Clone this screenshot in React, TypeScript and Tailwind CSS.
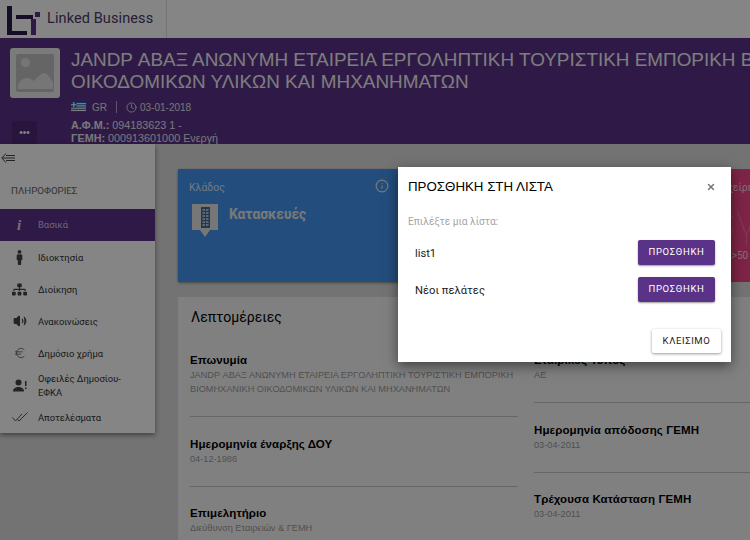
import React from "react";
import { Info, Clock, X, Volume2, Euro } from "lucide-react";
import { FaSitemap, FaMale } from "react-icons/fa";

const Logo = () => (
  <svg width="34" height="31" viewBox="0 0 34 31" className="shrink-0">
    <path d="M0 2h5v25h15v4H0z" fill="#2f1a4d" />
    <path d="M9 11h17v4H9z" fill="#2f1a4d" />
    <rect x="28" y="8" width="5" height="5" fill="#5a3288" />
    <rect x="24" y="15" width="5" height="16" fill="#5a3288" />
  </svg>
);

const Placeholder = () => (
  <svg width="50" height="50" viewBox="0 0 50 50" className="block">
    <rect width="50" height="50" rx="3" fill="#ececec" />
    <rect x="6" y="6" width="38" height="38" rx="2" fill="#c2c2c2" />
    <circle cx="15.500" cy="14.500" r="4.500" fill="#e2e2e2" />
    <path d="M8 41v-4c2-4 5-7 9-7 3 0 5 2 7 3 3-3 7-8 10-8 3 0 6 5 9 9v7z" fill="#e2e2e2" />
  </svg>
);

const Flag = () => (
  <svg width="15" height="10" viewBox="0 0 27 18">
    <rect width="27" height="18" fill="#fff" />
    {[0, 4, 8, 12, 16].map((y) => (
      <rect key={y} y={y} width="27" height="2" fill="#1f5fb0" />
    ))}
    <rect width="10" height="10" fill="#1f5fb0" />
    <path d="M4 0h2v10H4zM0 4h10v2H0z" fill="#fff" />
  </svg>
);

const Tower = () => (
  <svg width="26" height="33" viewBox="0 0 26 33">
    <path d="M0 0h26v26h-8l-5 7-5-7H0z" fill="#e4e4e4" />
    <path d="M9 3h9v21H9z" fill="#3f6ea3" />
    <path d="M10.500 6h6M10.500 9h6M10.500 12h6M10.500 15h6M10.500 18h6M10.500 21h6" stroke="#e4e4e4" strokeWidth="1.300" />
    <path d="M13.500 4v19" stroke="#3f6ea3" strokeWidth="1" />
  </svg>
);

const DebtIcon = () => (
  <svg width="14" height="13" viewBox="0 0 14 13" fill="#444">
    <circle cx="5.500" cy="3.500" r="3" />
    <path d="M0 12.500c0-3 2.500-4.500 5.500-4.500s5.500 1.500 5.500 4.500z" />
    <rect x="12" y="2" width="1.500" height="5" />
    <rect x="12" y="8.500" width="1.500" height="1.600" />
  </svg>
);

const DoubleCheck = () => (
  <svg width="16" height="10" viewBox="0 0 16 10" fill="none" stroke="#555" strokeWidth="1">
    <path d="M0.500 5.500l3 3.500 6.500-7" />
    <path d="M5.500 7.500l1.500 1.500 8.500-8.500" />
  </svg>
);

const BackArrow = () => (
  <svg width="14" height="10" viewBox="0 0 14 10" fill="none" stroke="#444" strokeWidth="1">
    <path d="M5 0.500L0.800 5 5 9.500" />
    <path d="M1 5h13M5 2.500h9M5 7.500h9" />
  </svg>
);

const nav: { label: React.ReactNode; icon: React.ReactNode }[] = [
  { label: "Ιδιοκτησία", icon: <FaMale size={15} /> },
  { label: "Διοίκηση", icon: <FaSitemap size={15} /> },
  { label: "Ανακοινώσεις", icon: <Volume2 size={14} fill="currentColor" /> },
  { label: "Δημόσιο χρήμα", icon: <Euro size={14} strokeWidth={1.2} /> },
  { label: "Οφειλές Δημοσίου-ΕΦΚΑ", icon: <DebtIcon /> },
  { label: "Αποτελέσματα", icon: <DoubleCheck /> },
];

const Field = ({ title, value, rule = true }: { title: string; value: string; rule?: boolean }) => (
  <div className={`pb-[20px] ${rule ? "border-b border-[#c4c4c4] mb-[19.5px]" : ""}`}>
    <div className="text-[11.5px] tracking-[0.12px] leading-[14px] font-bold text-black">{title}</div>
    <div className="text-[9.2px] leading-[14px] mt-[1px] text-[#9a9a9a]">{value}</div>
  </div>
);

export default function App() {
  return (
    <div className="relative w-[750px] h-[540px] overflow-hidden bg-[#dddddd] font-['Liberation_Sans',sans-serif]">
      <header className="h-[38px] bg-white flex">
        <div className="w-[167px] border-r border-[#dddddd] flex items-center pl-[7px] gap-[6px]">
          <Logo />
          <span className="text-[14.5px] tracking-[0.1px] text-[#4a3a66] font-['Roboto',sans-serif]">Linked Business</span>
        </div>
      </header>

      <section className="h-[106px] bg-[#5a3288] flex overflow-hidden">
        <div className="w-[71px] shrink-0 pl-[10px] pt-[10px]">
          <Placeholder />
          <div className="mt-[23px] ml-[2px] w-[25px] h-[24px] rounded-[2px] bg-[#4d2a76] flex items-center justify-center text-white text-[10px] leading-none">
            •••
          </div>
        </div>
        <div className="pt-[11px] min-w-0 text-white">
          <h1 className="text-[18.9px] leading-[22px] whitespace-nowrap text-[#f0f0f0]">
            JANDP ΑΒΑΞ ΑΝΩΝΥΜΗ ΕΤΑΙΡΕΙΑ ΕΡΓΟΛΗΠΤΙΚΗ ΤΟΥΡΙΣΤΙΚΗ ΕΜΠΟΡΙΚΗ ΒΙΟΜΗΧΑΝΙΚΗ
            <br />
            ΟΙΚΟΔΟΜΙΚΩΝ ΥΛΙΚΩΝ ΚΑΙ ΜΗΧΑΝΗΜΑΤΩΝ
          </h1>
          <div className="flex items-center mt-[7px] h-[14px] text-[10px] text-[#e0e0e0]">
            <Flag />
            <span className="ml-[6px]">GR</span>
            <span className="ml-[9px] mr-[9px] w-px h-[12px] bg-[#b9a8cf]" />
            <Clock size={11} />
            <span className="ml-[3px]">03-01-2018</span>
          </div>
          <div className="mt-[5px] text-[10.8px] leading-[13px] text-[#e6e6e6]">
            <div><b>Α.Φ.Μ.:</b> 094183623 1 -</div>
            <div><b>ΓΕΜΗ:</b> 000913601000 Ενεργή</div>
          </div>
        </div>
      </section>

      <div className="flex h-[396px]">
        <aside className="w-[155px] h-[289px] shrink-0 bg-white shadow-[0_2px_5px_rgba(0,0,0,0.45)] font-['Roboto',sans-serif] z-10">
          <div className="h-[30px] pl-[1px] pt-[9px]"><BackArrow /></div>
          <div className="h-[35px] pl-[11px] pt-[11px] text-[9.7px] leading-[12px] text-[#666]">ΠΛΗΡΟΦΟΡΙΕΣ</div>
          <div className="h-[32px] bg-[#5a3288] flex items-center text-[9.4px]">
            <span className="w-[38px] pl-[17px] font-['Liberation_Serif',serif] italic font-bold text-[15px] text-[#ddd]">i</span>
            <span className="text-[#cfc3df]">Βασικά</span>
          </div>
          {nav.map((n, i) => (
            <div key={i} className="h-[32px] flex items-center text-[9.4px] leading-[14px] text-[#333]">
              <span className="w-[38px] shrink-0 flex justify-center pl-[1px] text-[#444]">{n.icon}</span>
              <span className="pr-[20px] pt-[1px]">{n.label}</span>
            </div>
          ))}
        </aside>

        <main className="flex-1 min-w-0 pl-[23px] pt-[25px] font-['Roboto',sans-serif]">
          <div className="flex w-[800px] gap-[8px]">
            <div className="relative w-[400px] h-[113px] bg-[#4394ee] rounded-[1px] shadow-[0_1px_3px_rgba(0,0,0,0.4)] text-white pl-[11px] pt-[12px]">
              <div className="text-[10.5px] leading-[14px] text-[#d9e8f8]">Κλάδος</div>
              <div className="flex mt-[9px] gap-[11px]">
                <div className="ml-[3px]"><Tower /></div>
                <div className="text-[13.8px] font-bold leading-[16px] mt-[2px] text-[#e8e8e8]">Κατασκευές</div>
              </div>
              <Info size={14} className="absolute left-[197px] top-[10px] text-[#e8e8e8]" />
            </div>
            <div className="w-[400px] h-[113px] bg-[#f24587] text-white pl-[130px] pt-[12px]">
              <div className="text-[10.5px] leading-[14px] text-[#f9d6e3] whitespace-nowrap">Επιχείρηση</div>
              <div className="text-[44px] font-thin leading-[44px] mt-[4px] -ml-[37px] text-[#f46ea0] whitespace-nowrap">Μεγάλη</div>
              <div className="text-[10px] leading-[14px] mt-[6px] ml-[6px] text-[#f9d6e3] whitespace-nowrap">ΜΕ&gt;50</div>
            </div>
          </div>

          <div className="mt-[15px] w-[700px] h-[300px] bg-[#f6f6f6] pl-[12px] pt-[11px] font-['Liberation_Sans',sans-serif]">
            <h2 className="text-[14px] leading-[18px] ml-[1px] text-black font-['Roboto',sans-serif]">Λεπτομέρειες</h2>
            <div className="flex gap-[16px] mt-[27px]">
              <div className="w-[328px] shrink-0">
                <Field
                  title="Επωνυμία"
                  value="JANDP ΑΒΑΞ ΑΝΩΝΥΜΗ ΕΤΑΙΡΕΙΑ ΕΡΓΟΛΗΠΤΙΚΗ ΤΟΥΡΙΣΤΙΚΗ ΕΜΠΟΡΙΚΗ ΒΙΟΜΗΧΑΝΙΚΗ ΟΙΚΟΔΟΜΙΚΩΝ ΥΛΙΚΩΝ ΚΑΙ ΜΗΧΑΝΗΜΑΤΩΝ"
                />
                <Field title="Ημερομηνία έναρξης ΔΟΥ" value="04-12-1986" />
                <Field title="Επιμελητήριο" value="Διεύθυνση Εταιρειών & ΓΕΜΗ" rule={false} />
              </div>
              <div className="w-[320px] shrink-0">
                <Field title="Εταιρικός Τύπος" value="ΑΕ" />
                <Field title="Ημερομηνία απόδοσης ΓΕΜΗ" value="03-04-2011" />
                <Field title="Τρέχουσα Κατάσταση ΓΕΜΗ" value="03-04-2011" rule={false} />
              </div>
            </div>
          </div>
        </main>
      </div>

      <div className="absolute inset-0 z-20 bg-black/[0.48]" />

      <div className="absolute z-30 left-[398px] top-[167px] w-[333px] h-[195px] bg-white shadow-[0_4px_12px_rgba(0,0,0,0.5)] px-[10px] font-['Roboto',sans-serif]">
        <div className="flex items-center justify-between h-[40px]">
          <h3 className="text-[13.3px] font-['Liberation_Sans',sans-serif] text-black">ΠΡΟΣΘΗΚΗ ΣΤΗ ΛΙΣΤΑ</h3>
          <X size={10} strokeWidth={3.5} className="text-[#777] mr-[5px]" />
        </div>
        <div className="mt-[8px] text-[10.2px] leading-[14px] text-[#a5a5a5]">Επιλέξτε μια λίστα:</div>
        <div className="mt-[11px] flex items-center justify-between h-[25px] pl-[7px] pr-[6px]">
          <span className="text-[11.2px] text-[#222] pt-[3px]">list1</span>
          <button className="w-[77px] h-[25px] rounded-[2px] bg-[#5a3288] text-white text-[9.5px] tracking-[0.7px] shadow-[0_1px_2px_rgba(0,0,0,0.4)]">ΠΡΟΣΘΗΚΗ</button>
        </div>
        <div className="mt-[12px] flex items-center justify-between h-[25px] pl-[7px] pr-[6px]">
          <span className="text-[11.2px] text-[#222] pt-[3px]">Νέοι πελάτες</span>
          <button className="w-[77px] h-[25px] rounded-[2px] bg-[#5a3288] text-white text-[9.5px] tracking-[0.7px] shadow-[0_1px_2px_rgba(0,0,0,0.4)]">ΠΡΟΣΘΗΚΗ</button>
        </div>
        <div className="mt-[27px] flex justify-end">
          <button className="w-[69px] h-[24px] rounded-[2px] bg-white text-[#222] text-[9.5px] tracking-[0.6px] shadow-[0_1px_3px_rgba(0,0,0,0.4)]">ΚΛΕΙΣΙΜΟ</button>
        </div>
      </div>
    </div>
  );
}
